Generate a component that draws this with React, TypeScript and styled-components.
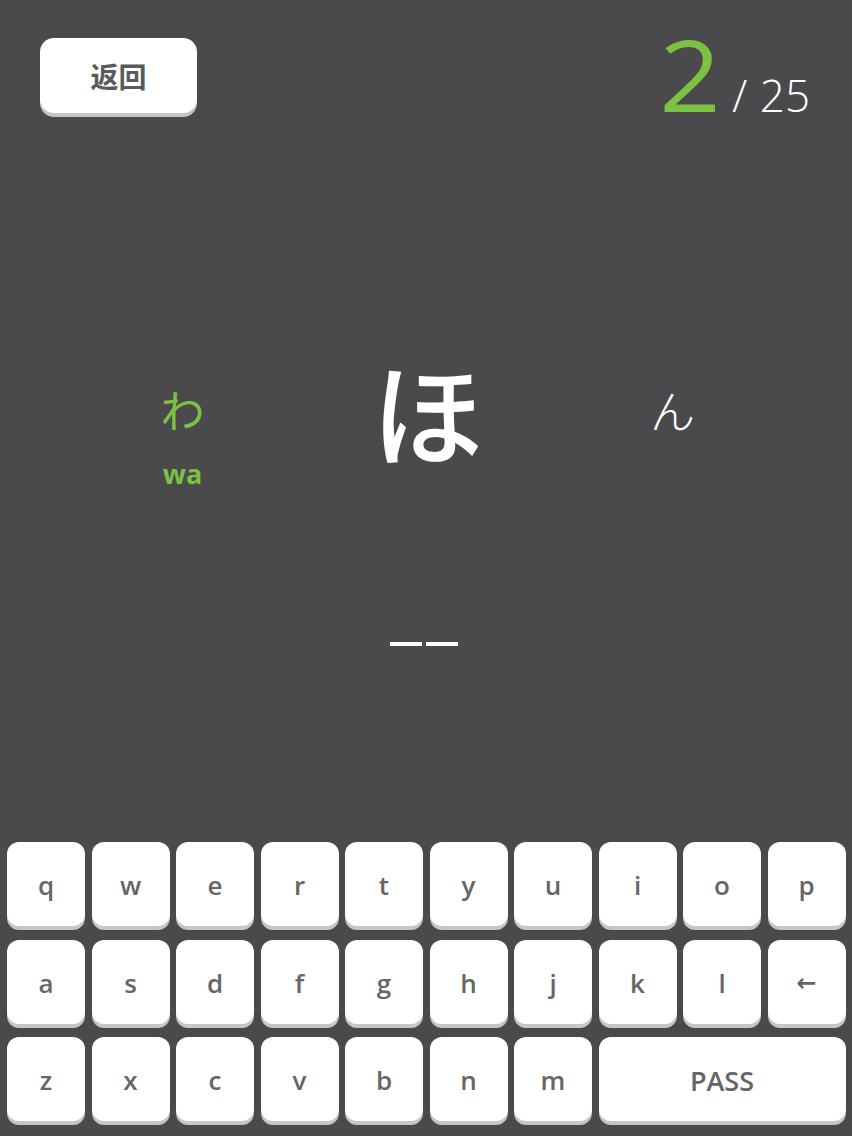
import React from 'react'
import styled, { createGlobalStyle } from 'styled-components'

const GlobalStyle = createGlobalStyle`
  html, body {
    margin: 0;
    padding: 0;
    background: #4a494c;
  }
`

const rows: string[][] = [
  ['q', 'w', 'e', 'r', 't', 'y', 'u', 'i', 'o', 'p'],
  ['a', 's', 'd', 'f', 'g', 'h', 'j', 'k', 'l'],
  ['z', 'x', 'c', 'v', 'b', 'n', 'm'],
]

export default function App() {
  return (
    <Root>
      <GlobalStyle />
      <Header>
        <BackButton>返回</BackButton>
        <Score>
          <Current>2</Current>
          <Total>/ 25</Total>
        </Score>
      </Header>

      <Stage>
        <KanaRow>
          <KanaColumn>
            <Kana size={44} color="#7cc142" weight={400}>
              わ
            </Kana>
            <Romaji>wa</Romaji>
          </KanaColumn>
          <KanaColumn>
            <Kana size={112} color="#ffffff" weight={500}>
              ほ
            </Kana>
          </KanaColumn>
          <KanaColumn>
            <Kana size={45} color="#ffffff" weight={300}>
              ん
            </Kana>
          </KanaColumn>
        </KanaRow>

        <Blanks>
          <Blank />
          <Blank />
        </Blanks>
      </Stage>

      <Keyboard>
        {rows[0].map((k) => (
          <Key key={k}>{k}</Key>
        ))}
        {rows[1].map((k) => (
          <Key key={k}>{k}</Key>
        ))}
        <Key symbol>←</Key>
        {rows[2].map((k) => (
          <Key key={k}>{k}</Key>
        ))}
        <Key span={3} wide>
          PASS
        </Key>
      </Keyboard>
    </Root>
  )
}

const Root = styled.div`
  width: 852px;
  height: 1136px;
  display: flex;
  flex-direction: column;
  background: #4a494c;
  font-family: 'Open Sans', 'Noto Sans CJK JP', sans-serif;
  overflow: hidden;
`

const Header = styled.div`
  display: flex;
  justify-content: space-between;
  align-items: flex-start;
  padding: 38px 42px 0 40px;
  height: 84px;
`

const BackButton = styled.div`
  width: 157px;
  height: 75px;
  box-sizing: border-box;
  background: #ffffff;
  border-radius: 14px;
  box-shadow: 0 4px 0 #c4c4c4;
  display: flex;
  align-items: center;
  justify-content: center;
  font-family: 'Noto Sans CJK SC', sans-serif;
  font-weight: 700;
  font-size: 28px;
  color: #5a5a5a;
`

const Score = styled.div`
  display: flex;
  align-items: baseline;
  margin-top: -13px;
  font-family: 'Open Sans', sans-serif;
  font-weight: 300;
`

const Current = styled.span`
  font-size: 98px;
  font-weight: 400;
  line-height: 1;
  color: #7cc142;
  margin-right: 14px;
  transform: scaleX(1.1);
`

const Total = styled.span`
  font-size: 44px;
  line-height: 1;
  color: #ffffff;
  word-spacing: 1px;
`

const Stage = styled.div`
  flex: 1;
  display: flex;
  flex-direction: column;
`

const KanaRow = styled.div`
  display: flex;
  padding-left: 60px;
  margin-top: 227px;
`

const KanaColumn = styled.div`
  width: 245px;
  display: flex;
  flex-direction: column;
  align-items: center;
`

const Kana = styled.div<{ size: number; color: string; weight: number }>`
  height: 120px;
  display: flex;
  align-items: center;
  justify-content: center;
  font-family: 'Noto Sans CJK JP', sans-serif;
  font-size: ${(p) => p.size}px;
  font-weight: ${(p) => p.weight};
  color: ${(p) => p.color};
  line-height: 1;
`

const Romaji = styled.div`
  margin-top: -11px;
  font-family: 'Open Sans', sans-serif;
  font-weight: 700;
  font-size: 27px;
  color: #7cc142;
  line-height: 1.2;
`

const Blanks = styled.div`
  display: flex;
  justify-content: center;
  gap: 4px;
  margin-top: auto;
  margin-bottom: 196px;
  padding-right: 4px;
`

const Blank = styled.div`
  width: 32px;
  height: 4px;
  background: #ffffff;
`

const Keyboard = styled.div`
  display: grid;
  grid-template-columns: repeat(10, 78px);
  grid-auto-rows: 84px;
  column-gap: 6.5px;
  row-gap: 13.5px;
  padding: 0 7px 15px 7px;
`

const Key = styled.div<{ span?: number; wide?: boolean; symbol?: boolean }>`
  grid-column: span ${(p) => p.span ?? 1};
  background: #ffffff;
  border-radius: 12px;
  box-shadow: 0 4px 0 #c6c6c6;
  display: flex;
  align-items: center;
  justify-content: center;
  font-family: ${(p) => (p.symbol ? "'DejaVu Sans'" : "'Open Sans'")}, sans-serif;
  font-weight: ${(p) => (p.symbol ? 700 : 600)};
  font-size: ${(p) => (p.wide ? 27 : p.symbol ? 24 : 26)}px;
  color: #666666;
  padding-top: 2px;
  box-sizing: border-box;
`
